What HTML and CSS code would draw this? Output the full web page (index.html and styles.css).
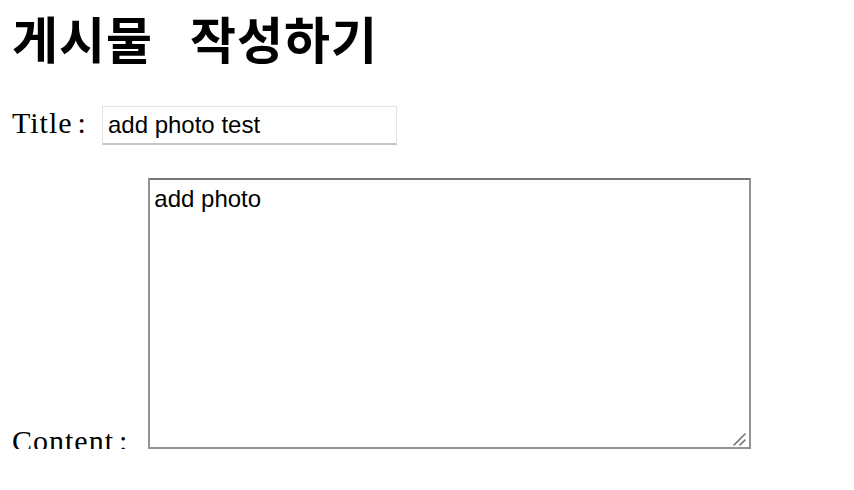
FILE: index.html
```html
<!DOCTYPE html>
<html lang="ko">
<head>
<meta charset="utf-8">
<title>게시물 작성하기</title>
<link rel="stylesheet" href="styles.css">
</head>
<body>
<h1 class="page-title">게시물 작성하기</h1>
<form class="post-form">
  <div class="field field-title">
    <label class="field-label" for="title">Title<span class="colon">:</span></label>
    <input id="title" class="title-input" type="text" value="add photo test">
  </div>
  <div class="field field-content">
    <label class="field-label" for="content">Content<span class="colon">:</span></label>
    <div class="textarea-wrap">
      <textarea id="content" class="content-input">add photo</textarea>
      <svg class="resize-grip" width="16" height="16" viewBox="0 0 16 16" aria-hidden="true">
        <line x1="2" y1="14" x2="13" y2="3" stroke="#6f6f6f" stroke-width="1.6" stroke-linecap="round"/>
        <line x1="8" y1="14" x2="13" y2="9" stroke="#6f6f6f" stroke-width="1.6" stroke-linecap="round"/>
      </svg>
    </div>
  </div>
</form>
</body>
</html>
```
FILE: styles.css
```css
html, body {
  background: #ffffff;
}
body {
  margin: 0;
  padding: 0 12px;
  font-family: "Liberation Serif", serif;
  color: #000;
}
.page-title {
  margin: 1px 0 0;
  font-family: "Noto Sans CJK KR", sans-serif;
  font-weight: 700;
  font-size: 50px;
  line-height: 72px;
  letter-spacing: 1px;
  word-spacing: 22px;
}
.post-form {
  margin: 0;
}
.field {
  display: flex;
}
.field-title {
  margin-top: 33px;
  align-items: baseline;
}
.field-content {
  margin-top: 33px;
  align-items: flex-end;
}
.field-label {
  font-family: "Liberation Serif", serif;
  font-size: 30px;
  line-height: 30px;
  letter-spacing: 1px;
}
.colon {
  margin-left: 5px;
}
.field-content .field-label {
  margin-bottom: -7px;
}
.title-input {
  box-sizing: border-box;
  width: 295px;
  height: 39px;
  margin: 0 0 0 15px;
  padding: 0 5px;
  border: 1px solid #e3e3e3;
  border-bottom: 2px solid #c4c4c4;
  font-family: "Liberation Sans", Arial, sans-serif;
  font-size: 24px;
  color: #000;
  background: #fff;
  outline: none;
}
.textarea-wrap {
  position: relative;
  margin-left: 20px;
  display: flex;
}
.content-input {
  box-sizing: border-box;
  width: 603px;
  height: 271px;
  margin: 0;
  padding: 5px 4px 3px;
  border: 2px solid #939393;
  border-top-color: #767676;
  font-family: "Liberation Sans", Arial, sans-serif;
  font-size: 24px;
  color: #000;
  background: #fff;
  outline: none;
  resize: none;
}
.resize-grip {
  position: absolute;
  right: 3px;
  bottom: 2px;
  pointer-events: none;
}
```
